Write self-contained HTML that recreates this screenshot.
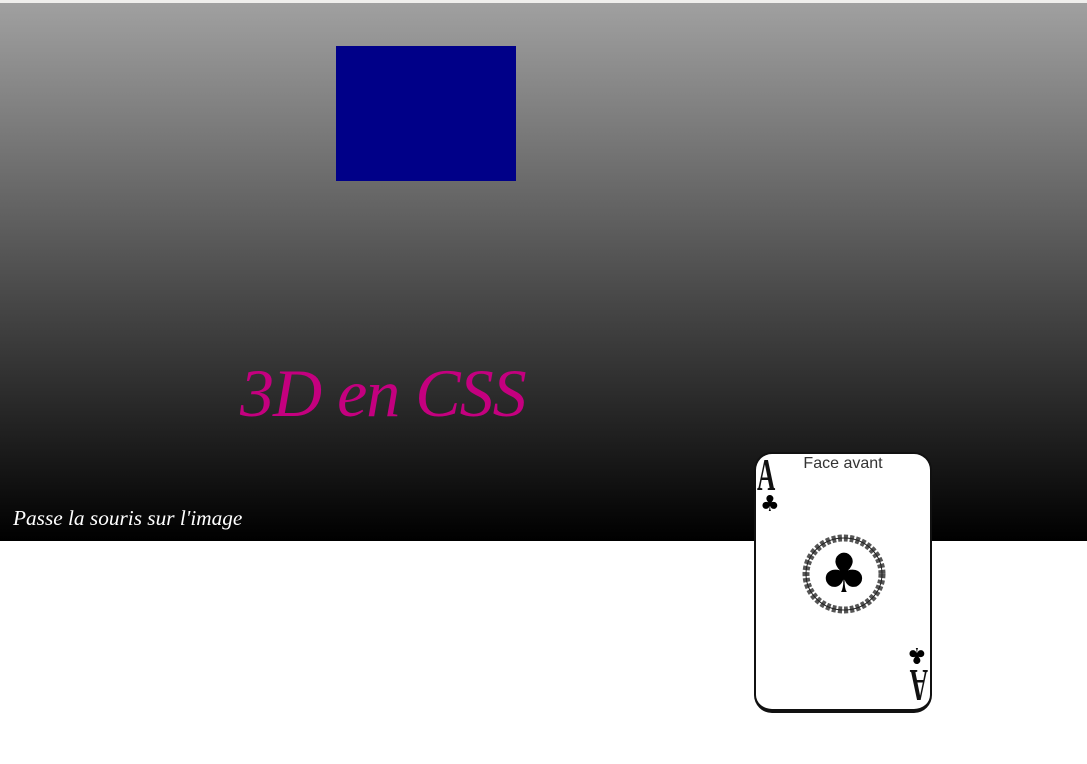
<!DOCTYPE html>
<html><head><meta charset="utf-8"><style>
html,body{margin:0;padding:0;width:1087px;height:764px;background:#fff;overflow:hidden;position:relative}
.top{position:absolute;left:0;top:0;width:1087px;height:3px;background:#efeeec}
.bg{position:absolute;left:0;top:3px;width:1087px;height:538px;background:linear-gradient(#a0a0a0,#000)}
.blue{position:absolute;left:336px;top:46px;width:180px;height:135px;background:#000088}
.title{position:absolute;left:240px;top:354px;font:italic 68px "Liberation Serif",serif;color:#c4007f;white-space:nowrap;letter-spacing:-1px}
.hint{position:absolute;left:13px;top:506px;font:italic 21.3px "Liberation Serif",serif;color:#fff;white-space:nowrap}
.card{position:absolute;left:754px;top:452px;width:174px;height:255px;border:2px solid #111;border-bottom-width:4px;border-radius:18px;background:#fff;overflow:hidden}
.lbl{position:absolute;left:0;right:0;top:1px;text-align:center;font:16px "Liberation Sans",sans-serif;color:#333}
.A{position:absolute;font:bold 46px "Liberation Serif",serif;color:#111;transform:scaleX(.55);transform-origin:left top;line-height:1}
</style></head><body>
<div class="top"></div>
<div class="bg"></div>
<div class="blue"></div>
<div class="title">3D en CSS</div>
<div class="hint">Passe la souris sur l'image</div>
<div class="card">
<div class="lbl">Face avant</div>
<div class="A" style="left:1px;top:-2px">A</div>
<div style="position:absolute;left:4px;top:38px;font:22px 'DejaVu Sans',sans-serif">♣</div>
<svg style="position:absolute;left:44px;top:78px" width="88" height="84" viewBox="0 0 88 84">
<ellipse cx="44" cy="42" rx="38" ry="36" fill="none" stroke="#555" stroke-width="7" stroke-dasharray="4 2"/>
<ellipse cx="44" cy="42" rx="38" ry="36" fill="none" stroke="#222" stroke-width="1"/>
<text x="44" y="60" text-anchor="middle" font-family="DejaVu Sans" font-size="54" fill="#000">♣</text>
</svg>
<div style="position:absolute;left:151px;top:188px;font:22px 'DejaVu Sans',sans-serif;transform:rotate(180deg)">♣</div>
<div class="A" style="left:172px;top:254px;transform:rotate(180deg) scaleX(.55);transform-origin:left top">A</div>
</div>
</body></html>
